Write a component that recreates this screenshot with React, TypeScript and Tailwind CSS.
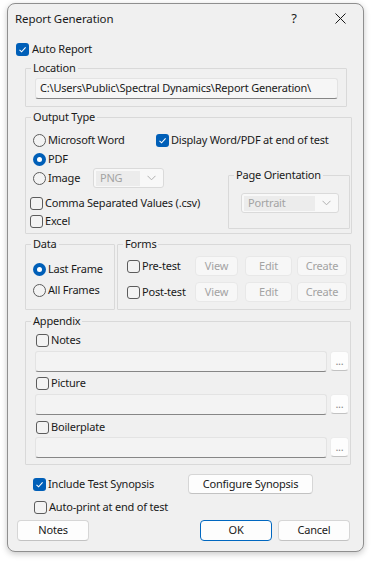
import React from "react";

const font = { fontFamily: '"Noto Sans", "Open Sans", Arial, sans-serif' };

function Check({ checked, label, className = "" }: { checked?: boolean; label: string; className?: string }) {
    return (
        <div className={"flex items-center h-[16px] " + className}>
            {checked ? (
                <div className="w-[13px] h-[13px] rounded-[3px] bg-[#005fb8] flex items-center justify-center shrink-0">
                    <svg width="9" height="9" viewBox="0 0 9 9">
                        <path d="M1.5 4.8 L3.6 6.8 L7.6 2.4" stroke="white" strokeWidth="1.1" fill="none" />
                    </svg>
                </div>
            ) : (
                <div className="w-[13px] h-[13px] rounded-[3px] border border-[#5c5c5c] bg-[#f3f3f3] shrink-0" />
            )}
            <span className="ml-[2px] whitespace-nowrap">{label}</span>
        </div>
    );
}

function Radio({ checked, label, className = "" }: { checked?: boolean; label: string; className?: string }) {
    return (
        <div className={"flex items-center h-[16px] " + className}>
            {checked ? (
                <div className="w-[13px] h-[13px] rounded-full bg-[#005fb8] flex items-center justify-center shrink-0">
                    <div className="w-[5px] h-[5px] rounded-full bg-white" />
                </div>
            ) : (
                <div className="w-[13px] h-[13px] rounded-full border border-[#5c5c5c] bg-[#f3f3f3] shrink-0" />
            )}
            <span className="ml-[2px] whitespace-nowrap">{label}</span>
        </div>
    );
}

function Btn({ label, className = "", disabled, primary }: { label: string; className?: string; disabled?: boolean; primary?: boolean }) {
    if (disabled) {
        return (
            <div className={"flex items-center justify-center rounded-[4px] bg-[#f7f7f7] border border-[#e8e8e8] text-[#a3a3a3] " + className}>
                {label}
            </div>
        );
    }
    return (
        <div
            className={
                "flex items-center justify-center rounded-[4px] bg-[#fdfdfd] border " +
                (primary ? "border-[#0067c0]" : "border-[#d6d6d6] border-b-[#c2c2c2]") +
                " " +
                className
            }
        >
            {label}
        </div>
    );
}

function Chevron() {
    return (
        <svg width="9" height="6" viewBox="0 0 9 6" className="shrink-0">
            <path d="M0.5 0.8 L4.5 4.8 L8.5 0.8" stroke="#b0b0b0" strokeWidth="1" fill="none" />
        </svg>
    );
}

function Select({ value, className = "" }: { value: string; className?: string }) {
    return (
        <div className={"flex items-center rounded-[3px] border border-[#dadada] bg-[#f8f8f8] pl-[2px] pr-[7px] " + className}>
            <div className="flex-1 h-[15px] bg-[#ececec] flex items-center pl-[4px] text-[#a3a3a3]">{value}</div>
            <div className="w-[16px] flex justify-end">
                <Chevron />
            </div>
        </div>
    );
}

function Field({ className = "", children }: { className?: string; children?: React.ReactNode }) {
    return (
        <div className={"flex items-center rounded-[3px] border border-[#e3e3e3] border-b-[#868686] bg-[#f3f3f3] " + className}>
            {children}
        </div>
    );
}

function Group({ title, className = "", children }: { title: string; className?: string; children?: React.ReactNode }) {
    return (
        <fieldset className={"border border-[#d9d9d9] rounded-[1px] " + className}>
            <legend className="ml-[5px] px-[2px] leading-[16px]">{title}</legend>
            {children}
        </fieldset>
    );
}

export default function App() {
    return (
        <div className="w-[371px] h-[562px] bg-white pl-[7px] pt-[3px] text-[11px] tracking-[-0.2px] text-[#1a1a1a]" style={font}>
            <div className="w-[357px] h-[549px] rounded-[8px] border border-[#8f8f8f] bg-[#f0f0f0] shadow-[0_2px_6px_rgba(0,0,0,0.22)] flex flex-col">
                {/* title bar */}
                <div className="h-[29px] flex items-center shrink-0">
                    <span className="pl-[7px] text-[11.5px] tracking-[-0.1px]">Report Generation</span>
                    <div className="ml-auto w-[46px] h-full flex items-center justify-center text-[13px]">?</div>
                    <div className="w-[46px] h-full flex items-center justify-center">
                        <svg width="11" height="11" viewBox="0 0 11 11">
                            <path d="M0.5 0.5 L10.5 10.5 M10.5 0.5 L0.5 10.5" stroke="#1a1a1a" strokeWidth="1" />
                        </svg>
                    </div>
                </div>

                <Check checked label="Auto Report" className="mt-[8px] ml-[8px] gap-[1px]" />

                <Group title="Location" className="mt-[3px] ml-[17px] w-[322px] pb-[7px]">
                    <Field className="mt-[2px] ml-[9px] w-[303px] h-[21px] pl-[4px] bg-[#f6f6f6]">
                        C:\Users\Public\Spectral Dynamics\Report Generation\
                    </Field>
                </Group>

                <Group title="Output Type" className="mt-[2px] ml-[17px] w-[327px] h-[125px]">
                    <div className="flex mt-[7px]">
                        <Radio label="Microsoft Word" className="ml-[7px] w-[123px]" />
                        <Check checked label="Display Word/PDF at end of test" />
                    </div>
                    <div className="flex">
                        <div className="w-[202px] flex flex-col">
                            <Radio checked label="PDF" className="ml-[7px] mt-[3px]" />
                            <div className="flex items-center h-[20px] mt-[1px]">
                                <Radio label="Image" className="ml-[7px] w-[60px]" />
                                <Select value="PNG" className="w-[71px] h-[20px]" />
                            </div>
                            <Check label="Comma Separated Values (.csv)" className="ml-[4px] mt-[7px]" />
                            <Check label="Excel" className="ml-[4px] mt-[2px]" />
                        </div>
                        <Group title="Page Orientation" className="mt-[19px] w-[122px] h-[62px]">
                            <Select value="Portrait" className="mt-[10px] ml-[12px] w-[98px] h-[20px]" />
                        </Group>
                    </div>
                </Group>

                <div className="flex mt-[2px] ml-[17px]">
                    <Group title="Data" className="w-[90px] h-[74px]">
                        <Radio checked label="Last Frame" className="ml-[7px] mt-[9px]" />
                        <Radio label="All Frames" className="ml-[7px] mt-[5px]" />
                    </Group>
                    <Group title="Forms" className="ml-[2px] w-[234px] h-[74px]">
                        <div className="flex items-center h-[20px] mt-[4px]">
                            <Check label="Pre-test" className="ml-[9px] w-[68px]" />
                            <Btn disabled label="View" className="w-[43px] h-[20px]" />
                            <Btn disabled label="Edit" className="ml-[7px] w-[47px] h-[20px]" />
                            <Btn disabled label="Create" className="ml-[5px] w-[50px] h-[20px]" />
                        </div>
                        <div className="flex items-center h-[20px] mt-[6px]">
                            <Check label="Post-test" className="ml-[9px] w-[68px]" />
                            <Btn disabled label="View" className="w-[43px] h-[20px]" />
                            <Btn disabled label="Edit" className="ml-[7px] w-[47px] h-[20px]" />
                            <Btn disabled label="Create" className="ml-[5px] w-[50px] h-[20px]" />
                        </div>
                    </Group>
                </div>

                <Group title="Appendix" className="mt-[3px] ml-[17px] w-[326px] h-[152px]">
                    <Check label="Notes" className="ml-[10px] mt-[3px]" />
                    <div className="flex mt-[3px]">
                        <Field className="ml-[9px] w-[292px] h-[21px]" />
                        <Btn label="..." className="ml-[3px] w-[19px] h-[20px] text-[#8a8a8a] border-[#ececec] bg-[#f9f9f9]" />
                    </div>
                    <Check label="Picture" className="ml-[10px] mt-[3px]" />
                    <div className="flex mt-[3px]">
                        <Field className="ml-[9px] w-[292px] h-[21px]" />
                        <Btn label="..." className="ml-[3px] w-[19px] h-[20px] text-[#8a8a8a] border-[#ececec] bg-[#f9f9f9]" />
                    </div>
                    <Check label="Boilerplate" className="ml-[10px] mt-[4px]" />
                    <div className="flex mt-[2px]">
                        <Field className="ml-[9px] w-[292px] h-[21px]" />
                        <Btn label="..." className="ml-[3px] w-[19px] h-[20px] text-[#8a8a8a] border-[#ececec] bg-[#f9f9f9]" />
                    </div>
                </Group>

                <div className="flex items-center h-[20px] mt-[9px]">
                    <Check checked label="Include Test Synopsis" className="ml-[25px] w-[155px]" />
                    <Btn label="Configure Synopsis" className="w-[125px] h-[20px]" />
                </div>
                <Check label="Auto-print at end of test" className="ml-[26px] mt-[5px]" />
                <div className="flex mt-[5px]">
                    <Btn label="Notes" className="ml-[9px] w-[72px] h-[21px]" />
                    <Btn primary label="OK" className="ml-[111px] w-[72px] h-[21px]" />
                    <Btn label="Cancel" className="ml-[6px] w-[72px] h-[21px]" />
                </div>
            </div>
        </div>
    );
}
